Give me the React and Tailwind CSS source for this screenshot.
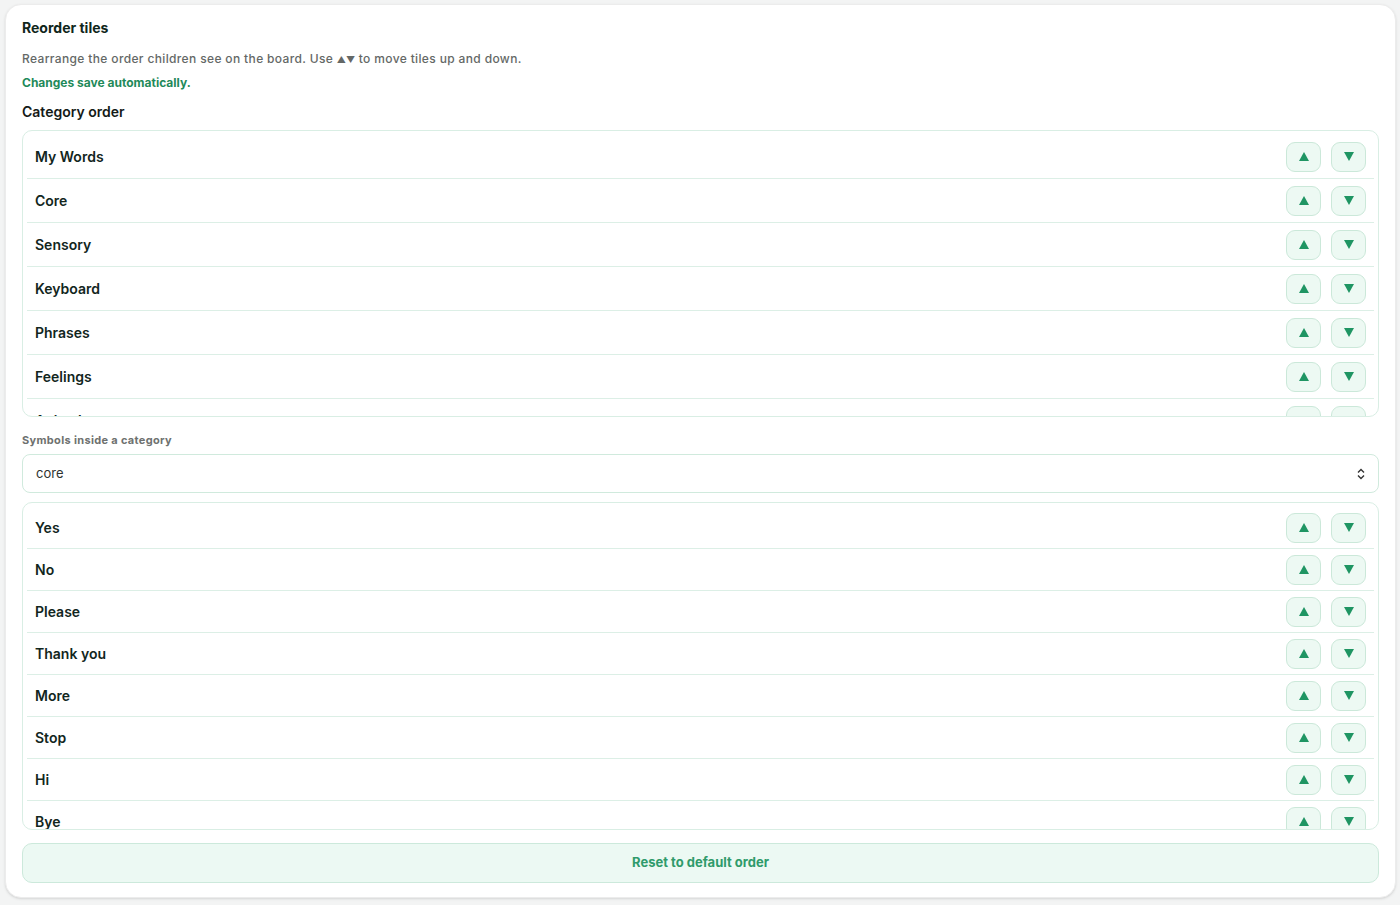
import { useState } from 'react';

const CATEGORIES = ['My Words', 'Core', 'Sensory', 'Keyboard', 'Phrases', 'Feelings', 'Animals', 'Food', 'Places'];
const SYMBOLS = ['Yes', 'No', 'Please', 'Thank you', 'More', 'Stop', 'Hi', 'Bye', 'Help', 'Go'];

function Triangle({ down }) {
  return (
    <svg width="10" height="9" viewBox="0 0 10 9" className="block">
      {down ? <path d="M0 0 H10 L5 9 Z" fill="#1f9563" /> : <path d="M5 0 L10 9 H0 Z" fill="#1f9563" />}
    </svg>
  );
}

function MoveButtons({ onUp, onDown }) {
  return (
    <div className="flex items-center gap-[10px]">
      <button
        onClick={onUp}
        className="w-[35px] h-[30px] flex items-center justify-center rounded-[9px] border border-[#cbe8d9] bg-[#edf9f3]"
      >
        <Triangle />
      </button>
      <button
        onClick={onDown}
        className="w-[35px] h-[30px] flex items-center justify-center rounded-[9px] border border-[#cbe8d9] bg-[#edf9f3]"
      >
        <Triangle down />
      </button>
    </div>
  );
}

// simple reorderable list, clipped to a fixed height like the board settings panel
function TileList({ items, setItems, rowHeight, height }) {
  const move = (i, dir) => {
    const j = i + dir;
    if (j < 0 || j >= items.length) return;
    const next = [...items];
    [next[i], next[j]] = [next[j], next[i]];
    setItems(next);
  };

  return (
    <div className={`rounded-[10px] border border-[#d9eee4] bg-white p-1 overflow-hidden ${height}`}>
      {items.map((item, i) => (
        <div
          key={item}
          className={`flex items-center justify-between pl-[8px] pr-[8px] border-b border-[#dcefe6] ${rowHeight}`}
        >
          <span className="text-[14px] font-semibold text-[#12261d]">{item}</span>
          <MoveButtons onUp={() => move(i, -1)} onDown={() => move(i, 1)} />
        </div>
      ))}
    </div>
  );
}

export default function App() {
  const [categories, setCategories] = useState(CATEGORIES);
  const [symbols, setSymbols] = useState(SYMBOLS);
  const [category, setCategory] = useState('core');

  return (
    <div className="min-h-screen bg-[#f3f4f4] pl-[5px] pr-[4px] pt-[4px] pb-[7px] font-['Inter',sans-serif]">
      <div className="bg-white rounded-[16px] border border-[#ececec] shadow-sm px-[16px] pt-[13px] pb-[14px]">
        <h2 className="text-[14px] leading-5 font-bold text-[#10261b]">Reorder tiles</h2>
        <p className="mt-[13px] h-4 text-[12px] leading-4 font-medium tracking-[0.03em] text-[#646866]">
          Rearrange the order children see on the board. Use{' '}
          <span className="text-[9px] leading-none tracking-normal">▲▼</span> to move tiles up and down.
        </p>
        <p className="mt-[8px] text-[12px] leading-4 font-bold text-[#1f8a5a]">Changes save automatically.</p>

        <h3 className="mt-[11px] text-[14px] leading-5 font-semibold text-[#141a17]">Category order</h3>
        <div className="mt-[8px]">
          <TileList items={categories} setItems={setCategories} rowHeight="h-[44px]" height="h-[287px]" />
        </div>

        <label className="block mt-[15px] text-[11px] leading-4 font-bold tracking-[0.03em] text-[#6e716f]">
          Symbols inside a category
        </label>
        <div className="relative mt-[6px]">
          <select
            value={category}
            onChange={(e) => setCategory(e.target.value)}
            className="w-full h-[39px] appearance-none rounded-lg border-[1.5px] border-[#d0eadd] bg-white pl-[13px] pr-8 text-[13px] text-[#2e3330] outline-none"
          >
            <option value="core">core</option>
            <option value="my-words">my-words</option>
            <option value="sensory">sensory</option>
            <option value="feelings">feelings</option>
          </select>
          <svg
            width="8"
            height="12"
            viewBox="0 0 8 12"
            className="absolute right-[14px] top-1/2 -translate-y-1/2 pointer-events-none"
          >
            <path d="M1 4.5 L4 1.5 L7 4.5 M1 7.5 L4 10.5 L7 7.5" fill="none" stroke="#333" strokeWidth="1.4" />
          </svg>
        </div>

        <div className="mt-[9px]">
          <TileList items={symbols} setItems={setSymbols} rowHeight="h-[42px]" height="h-[328px]" />
        </div>

        <button
          onClick={() => {
            setCategories(CATEGORIES);
            setSymbols(SYMBOLS);
          }}
          className="mt-[13px] w-full h-[40px] rounded-[10px] border-[1.5px] border-[#cce9db] bg-[#ecf9f3] text-[13px] font-bold text-[#2f9b6b]"
        >
          Reset to default order
        </button>
      </div>
    </div>
  );
}
